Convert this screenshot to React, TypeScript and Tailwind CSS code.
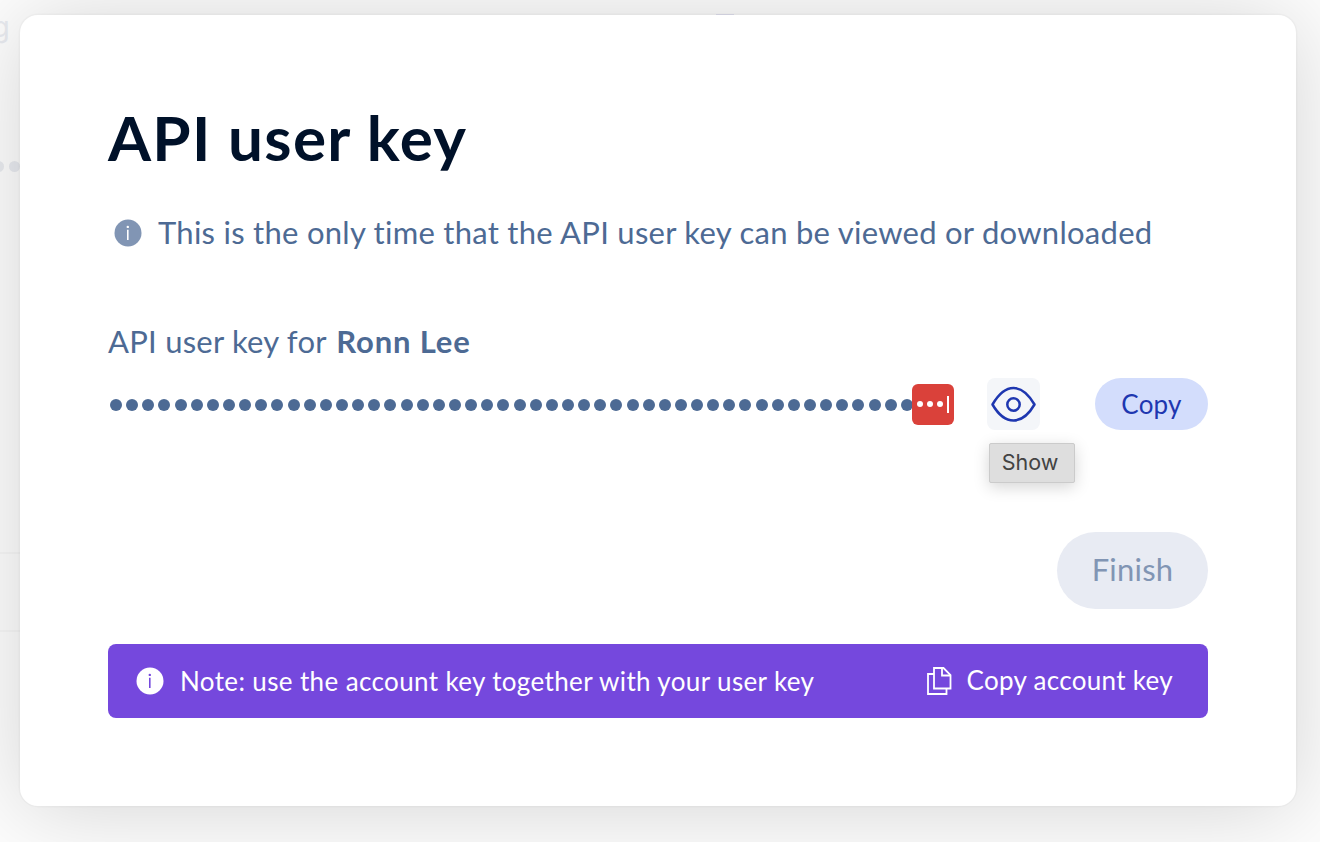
import React from 'react';

const maskedKey = Array.from({ length: 50 });

function InfoIcon({ className, mark }: { className: string; mark: string }) {
  return (
    <svg viewBox="0 0 28 28" className={className}>
      <circle cx="14" cy="14" r="13.5" fill="currentColor" />
      <circle cx="13.800" cy="7.900" r="1.200" fill={mark} />
      <path d="M13.800 10.800V21" stroke={mark} strokeWidth="1.600" />
    </svg>
  );
}

function EyeIcon() {
  return (
    <svg viewBox="0 0 46 36" className="w-[46px] h-9" fill="none" stroke="#1e37b0" strokeWidth="2.5">
      <path d="M1.500 18.500C7 9 14 2 22.500 2S38 9 43.500 18.500C38 28 31 34.500 22.500 34.500S7 28 1.500 18.500Z" strokeLinejoin="round" />
      <circle cx="22.500" cy="18.500" r="6.200" />
    </svg>
  );
}

function FilesIcon() {
  return (
    <svg viewBox="0 0 26 30" className="w-[26px] h-[30px]" fill="none" stroke="white" strokeWidth="1.800">
      <path d="M8 2H17.500L24.500 9V22.500H8Z" />
      <path d="M16 2V9.500H24.500" />
      <path d="M8 8H2V28H20.500V22.500" />
    </svg>
  );
}

export default function App() {
  return (
    <div className="relative w-[1320px] h-[842px] overflow-hidden bg-[#fdfdfd] font-['Lato',sans-serif] text-[#4d6a94]">
      {/* page behind the dialog */}
      <div className="absolute left-[-8px] top-[7px] font-['Inter',sans-serif] text-[29px] leading-[40px] text-[#e9ebf0]">g</div>
      <div className="absolute left-[-7px] top-[161px] flex gap-[5px]">
        <span className="size-[11px] rounded-full bg-[#e9ebf0]" />
        <span className="size-[11px] rounded-full bg-[#e9ebf0]" />
      </div>
      <div className="absolute left-0 top-[552px] w-5 h-[80px] border-y-2 border-[#f7f7f7]" />
      <div className="absolute left-[716px] top-[14px] w-[18px] h-[2px] bg-[#e4e4f4]" />

      <div className="relative ml-5 mt-[15px] w-[1276px] h-[791px] rounded-[18px] bg-white px-[88px] pt-[82px] shadow-[0_0_0_1.5px_rgba(0,0,0,0.025),0_4px_90px_rgba(0,0,0,0.165)]">
        <h1 className="h-20 text-[62px] leading-[80px] font-bold tracking-[1.3px] text-[#001129] whitespace-nowrap">API user key</h1>

        <div className="mt-[36px] h-10 flex items-center pl-[6px] whitespace-nowrap">
          <InfoIcon className="size-7 text-[#8195b4]" mark="white" />
          <p className="ml-4 pb-[2px] text-[31px] leading-[38px] tracking-[0.27px]">This is the only time that the API user key can be viewed or downloaded</p>
        </div>

        <p className="mt-[68px] h-10 text-[31px] leading-10 tracking-[0.23px] whitespace-nowrap">
          API user key for <strong className="ml-[2px] font-bold tracking-[0.85px]">Ronn Lee</strong>
        </p>

        <div className="mt-[17px] h-[52px] flex items-center">
          <div className="w-[805px] pl-[2px] pt-[2px] flex justify-between">
            {maskedKey.map((_, index) => (
              <span key={index} className="size-3 rounded-full bg-[#4d6a94]" />
            ))}
          </div>
          <div className="relative -ml-px w-[42px] h-[41px] rounded-md bg-[#da413a] flex items-center justify-center gap-[4px]">
            <span className="size-[6px] rounded-full bg-white" />
            <span className="size-[6px] rounded-full bg-white" />
            <span className="size-[6px] rounded-full bg-white" />
            <span className="w-[2px] h-[17px] bg-white" />
          </div>
          <div className="relative ml-[33px]">
            <button className="w-[53px] h-[52px] rounded-lg bg-[#f4f6f9] flex items-center justify-center">
              <EyeIcon />
            </button>
            <div className="absolute left-[2px] top-[65px] w-[86px] h-10 flex items-center justify-center pr-[4px] pb-[2px] rounded-[2px] bg-[#dedede] border border-[#cbcbcb] font-['Inter',sans-serif] text-[21.5px] text-[#434343] shadow-[0_4px_16px_rgba(0,0,0,0.17)]">
              <span>Show</span>
            </div>
          </div>
          <button className="ml-[55px] w-[113px] h-[52px] rounded-full bg-[#d3ddfc] text-[26px] tracking-[0.2px] text-[#1e37b0]">Copy</button>
        </div>

        <div className="mt-[102px] flex justify-end">
          <button className="w-[151px] h-[77px] rounded-full bg-[#e8ebf3] pb-[3px] text-[31px] tracking-[0.2px] text-[#8195b4]">Finish</button>
        </div>

        <div className="mt-[35px] h-[74px] rounded-lg bg-[#7548dd] flex items-center pl-7 pr-[35px] text-[26px] tracking-[0.37px] text-white whitespace-nowrap">
          <InfoIcon className="size-7" mark="#7548dd" />
          <span className="ml-4">Note: use the account key together with your user key</span>
          <button className="ml-auto flex items-center gap-[15px] tracking-[0.3px]">
            <FilesIcon />
            <span className="pb-[2px]">Copy account key</span>
          </button>
        </div>
      </div>
    </div>
  );
}
